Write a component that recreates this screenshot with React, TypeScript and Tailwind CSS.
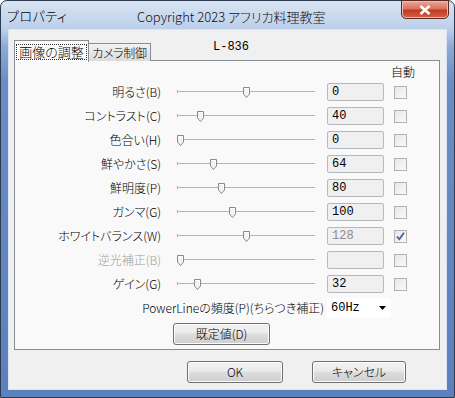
import React from "react";

interface Row {
  label: string;
  thumb: number;
  value: string;
  checked?: boolean;
  valueDisabled?: boolean;
  disabled?: boolean;
}

const rows: Row[] = [
  { label: "明るさ(B)", thumb: 245, value: "0" },
  { label: "コントラスト(C)", thumb: 199, value: "40" },
  { label: "色合い(H)", thumb: 179, value: "0" },
  { label: "鮮やかさ(S)", thumb: 212, value: "64" },
  { label: "鮮明度(P)", thumb: 220, value: "80" },
  { label: "ガンマ(G)", thumb: 231, value: "100" },
  { label: "ホワイトバランス(W)", thumb: 245, value: "128", checked: true, valueDisabled: true },
  { label: "逆光補正(B)", thumb: 179, value: "", disabled: true },
  { label: "ゲイン(G)", thumb: 196, value: "32" },
];

const SLIDER_LEFT = 176;

function Thumb() {
  return (
    <svg width="7" height="11" viewBox="0 0 7 11">
      <path d="M0.5 0.5 H6.5 V7 L3.5 10.5 L0.5 7 Z" fill="#f4f4f4" stroke="#8a8a8a" />
      <path d="M1.5 1.5 H5.5 V6.5" fill="none" stroke="#ffffff" />
    </svg>
  );
}

function Slider({ thumb }: { thumb: number }) {
  return (
    <div className="relative w-[138px] h-[24px]">
      <div className="absolute left-0 right-0 top-[11px] h-px bg-[#b4b4b4]" />
      <div className="absolute left-0 right-0 top-[12px] h-px bg-[#fafafa]" />
      <div className="absolute left-0 top-[10px] w-px h-[3px] bg-[#b4b4b4]" />
      <div className="absolute top-[7px]" style={{ left: thumb - SLIDER_LEFT - 3 }}>
        <Thumb />
      </div>
    </div>
  );
}

function CheckBox({ checked }: { checked?: boolean }) {
  return (
    <div className="w-[13px] h-[13px] border border-[#b1b1b1] bg-[linear-gradient(135deg,#e6e6e6,#fbfbfb)] flex items-center justify-center">
      {checked && (
        <svg width="9" height="9" viewBox="0 0 9 9">
          <path d="M1 4.5 L3.3 7.3 L8 0.8" fill="none" stroke="#4a5f96" strokeWidth="1.8" />
        </svg>
      )}
    </div>
  );
}

function Button({ children, className }: { children: React.ReactNode; className?: string }) {
  return (
    <div
      className={
        "h-[22px] rounded-[3px] border border-[#707070] bg-[linear-gradient(#f2f2f2_0%,#ebebeb_45%,#dddddd_50%,#cfcfcf_100%)] flex items-center justify-center text-[12px] text-black shadow-[inset_0_0_0_1px_#fcfcfc] " +
        (className ?? "")
      }
    >
      {children}
    </div>
  );
}

export default function App() {
  return (
    <div className="w-[455px] h-[398px] font-['Noto_Sans_CJK_JP',sans-serif] font-light [font-feature-settings:'palt'] text-[12px] leading-none">
      <div className="w-full h-full rounded-t-[7px] border border-[#2c3a52] bg-[linear-gradient(#d8e4f3_0px,#bccfea_28px,#8fabd6_45px,#6a8dc5_80px,#5c80bd_398px)] flex flex-col px-[7px] pb-[7px]">
        {/* title bar */}
        <div className="h-[28px] flex items-center relative shrink-0">
          <span className="text-[13px] text-black ml-[-1px] tracking-[0.5px]">プロパティ</span>
          <span className="absolute left-[129px] top-[9px] text-[13px] text-[#111]">
            Copyright 2023 アフリカ料理教室
          </span>
          <div className="absolute right-[-2px] top-[-1px] w-[48px] h-[19px] rounded-b-[5px] border border-[#5a2a24] bg-[linear-gradient(#e9a99c_0%,#d7735f_45%,#c23b20_55%,#d6604a_100%)] flex items-center justify-center shadow-[inset_0_0_0_1px_#f1b9ad]">
            <svg width="12" height="10" viewBox="0 0 12 10">
              <path d="M1.5 1 L10.5 9 M10.5 1 L1.5 9" stroke="#ffffff" strokeWidth="2.6" />
            </svg>
          </div>
        </div>

        {/* client area */}
        <div className="flex-1 border border-[#dbe5f2] bg-[#f0f0f0] flex flex-col">
          <div className="pl-[5px] pr-[6px] pt-[10px]">
            {/* tab strip */}
            <div className="flex items-end h-[22px] relative z-10 -mb-[2px]">
              <div className="h-[22px] w-[75px] border border-b-0 border-[#898c95] bg-[#fcfcfc] flex items-center justify-center">
                <span className="border border-dotted border-[#333] px-[2px] h-[16px] flex items-center text-[13px]">画像の調整</span>
              </div>
              <div className="h-[18px] w-[62px] mb-[1px] border border-l-0 border-b-0 border-[#898c95] bg-[linear-gradient(#f2f2f2,#dcdcdc)] flex items-center justify-center text-[12px] tracking-[-0.3px]">
                カメラ制御
              </div>
              <span className="ml-[62px] mb-[9px] text-[12px] font-normal [font-family:'Liberation_Mono',monospace]">L-836</span>
            </div>

            {/* panel */}
            <div className="h-[290px] border border-[#898c95] bg-[#f9f9f9] flex flex-col pt-[3px]">
              <div className="h-[16px] flex items-center">
                <span className="ml-[376px] text-[12px]">自動</span>
              </div>
              {rows.map((r) => (
                <div key={r.label} className="h-[24px] flex items-center">
                  <div className={"w-[146px] text-right text-[12px] " + (r.disabled ? "text-[#9c9c9c]" : "text-black")}>
                    {r.label}
                  </div>
                  <div className="ml-[16px]">
                    <Slider thumb={r.thumb} />
                  </div>
                  <div
                    className={
                      "ml-[12px] w-[57px] h-[18px] rounded-[2px] border border-[#b5b8bf] bg-[#f0f0f0] flex items-center pl-[4px] text-[12px] font-normal [font-family:'Liberation_Mono',monospace] " +
                      (r.valueDisabled ? "text-[#8a8a8a]" : "text-black")
                    }
                  >
                    {r.value}
                  </div>
                  <div className="ml-[10px]">
                    <CheckBox checked={r.checked} />
                  </div>
                </div>
              ))}
              <div className="h-[24px] flex items-center">
                <div className="w-[309px] text-right text-[12px]">PowerLineの頻度(P)(ちらつき補正)</div>
                <div className="ml-[3px] w-[64px] h-[20px] bg-white flex items-center justify-between pl-[4px] pr-[5px]">
                  <span className="[font-family:'Liberation_Mono',monospace] font-normal text-[12px]">60Hz</span>
                  <svg width="7" height="4" viewBox="0 0 7 4">
                    <path d="M0 0 H7 L3.5 4 Z" fill="#000" />
                  </svg>
                </div>
              </div>
              <div className="mt-[3px] ml-[158px]">
                <Button className="w-[97px] h-[21px]">既定値(D)</Button>
              </div>
            </div>
          </div>

          {/* OK / Cancel */}
          <div className="flex justify-end gap-[29px] pr-[40px] mt-[11px]">
            <Button className="w-[96px]">OK</Button>
            <Button className="w-[94px]">キャンセル</Button>
          </div>
        </div>
      </div>
    </div>
  );
}
